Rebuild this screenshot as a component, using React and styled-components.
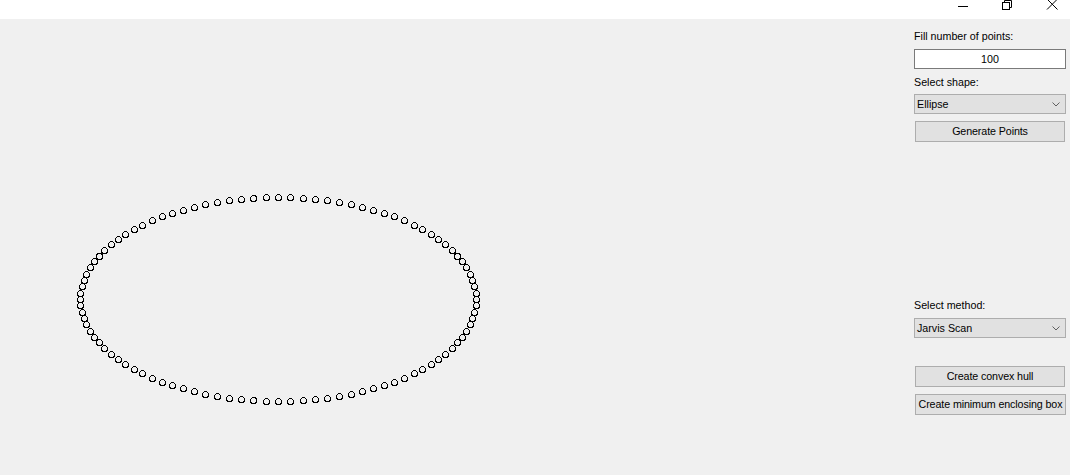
import React from "react";
import styled, { createGlobalStyle } from "styled-components";

const Global = createGlobalStyle`
  html, body { margin: 0; padding: 0; background: #f0f0f0; }
  body { font-family: "Liberation Sans", Arial, sans-serif; font-size: 10.7px; color: #000; }
  * { box-sizing: border-box; }
`;

const Window = styled.div`
  width: 1070px;
  height: 475px;
  display: flex;
  flex-direction: column;
  background: #f0f0f0;
  overflow: hidden;
`;

const TitleBar = styled.div`
  height: 19px;
  background: #ffffff;
  display: flex;
  justify-content: flex-end;
  flex-shrink: 0;
`;

const Caption = styled.svg`
  display: block;
  width: 46px;
  height: 19px;
  overflow: visible;
`;

const Body = styled.div`
  flex: 1;
  display: flex;
  min-height: 0;
`;

const Canvas = styled.div`
  flex: 1;
  position: relative;
`;

const Plot = styled.svg`
  display: block;
  width: 100%;
  height: 100%;
`;

const Side = styled.div`
  width: 156px;
  flex-shrink: 0;
  display: flex;
  flex-direction: column;
  padding-top: 11px;
`;

const Label = styled.div`
  height: 13px;
  line-height: 13px;
  margin-top: ${(p) => p.$mt || 0}px;
  white-space: nowrap;
`;

const TextBox = styled.div`
  width: 152px;
  height: 20px;
  margin-top: ${(p) => p.$mt || 0}px;
  background: #ffffff;
  border: 1px solid #7a7a7a;
  display: flex;
  align-items: center;
  justify-content: center;
  line-height: 13px;
`;

const Combo = styled.div`
  width: 152px;
  height: 20px;
  margin-top: ${(p) => p.$mt || 0}px;
  background: #e1e1e1;
  border: 1px solid #adadad;
  display: flex;
  align-items: center;
  justify-content: space-between;
  padding: 0 5px 0 2px;
  line-height: 13px;
`;

const Chevron = styled.svg`
  width: 8px;
  height: 5px;
  display: block;
`;

const Button = styled.div`
  width: ${(p) => (p.$wide ? 151 : 150)}px;
  height: 21px;
  margin-left: 1px;
  margin-top: ${(p) => p.$mt || 0}px;
  background: #e1e1e1;
  border: 1px solid #adadad;
  display: flex;
  align-items: center;
  justify-content: center;
  white-space: nowrap;
  line-height: 13px;
  letter-spacing: -0.1px;
`;

const N = 100;
const CX = 278;
const CY = 280;
const A = 198;
const B = 102;

const points = Array.from({ length: N }, (_, i) => {
  const t = (2 * Math.PI * i) / N;
  return [Math.round(CX + A * Math.cos(t)) + 0.5, Math.round(CY + B * Math.sin(t)) + 0.5];
});

function ChevronIcon() {
  return (
    <Chevron viewBox="0 0 8 5">
      <polyline points="0.5,0.5 4,4 7.5,0.5" fill="none" stroke="#606060" strokeWidth="1" />
    </Chevron>
  );
}

export default function App() {
  return (
    <Window>
      <Global />
      <TitleBar>
        <Caption viewBox="0 0 46 19">
          <line x1="26" y1="6.5" x2="36" y2="6.5" stroke="#000" strokeWidth="1" />
        </Caption>
        <Caption viewBox="0 0 46 19">
          <rect x="24.5" y="2.5" width="7" height="7" fill="none" stroke="#000" strokeWidth="1" />
          <polyline points="26.5,2.5 26.5,0.5 33.5,0.5 33.5,7.5 31.5,7.5" fill="none" stroke="#000" strokeWidth="1" />
        </Caption>
        <Caption viewBox="0 0 46 19">
          <line x1="23" y1="-1" x2="33.5" y2="9.5" stroke="#000" strokeWidth="1" />
          <line x1="33.5" y1="-1" x2="23" y2="9.5" stroke="#000" strokeWidth="1" />
        </Caption>
      </TitleBar>
      <Body>
        <Canvas>
          <Plot>
            {points.map(([x, y], i) => (
              <circle key={i} cx={x} cy={y} r="3" fill="none" stroke="#000" strokeWidth="1" shapeRendering="crispEdges" />
            ))}
          </Plot>
        </Canvas>
        <Side>
          <Label>Fill number of points:</Label>
          <TextBox $mt={6}>100</TextBox>
          <Label $mt={7}>Select shape:</Label>
          <Combo $mt={5}>
            <span>Ellipse</span>
            <ChevronIcon />
          </Combo>
          <Button $mt={7}>Generate Points</Button>
          <Label $mt={157}>Select method:</Label>
          <Combo $mt={6}>
            <span>Jarvis Scan</span>
            <ChevronIcon />
          </Combo>
          <Button $mt={28}>Create convex hull</Button>
          <Button $mt={7} $wide>Create minimum enclosing box</Button>
        </Side>
      </Body>
    </Window>
  );
}
